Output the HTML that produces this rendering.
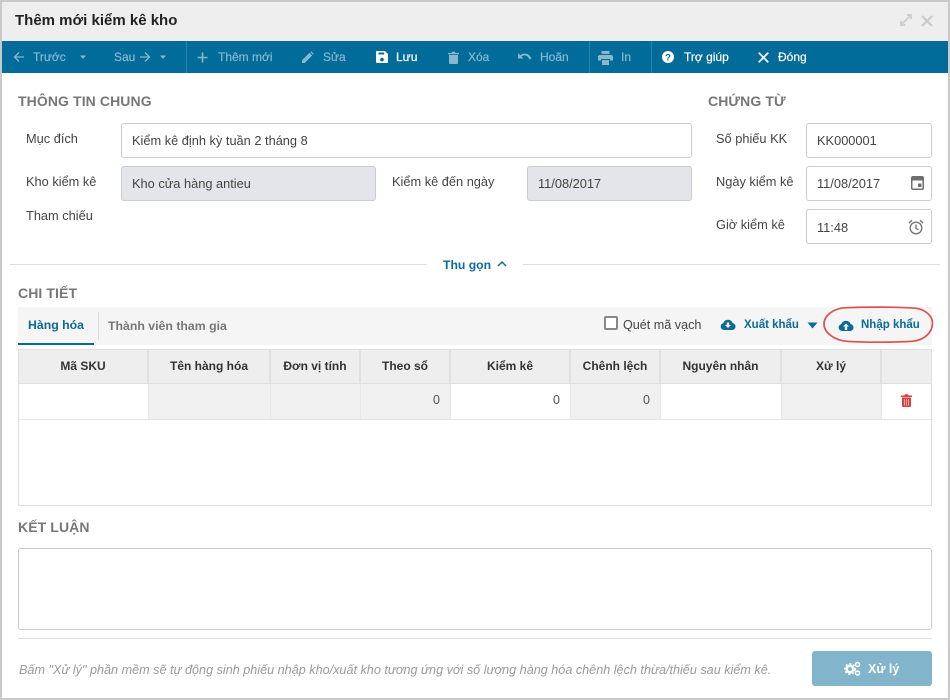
<!DOCTYPE html>
<html lang="vi">
<head>
<meta charset="utf-8">
<title>Thêm mới kiểm kê kho</title>
<style>
*{box-sizing:border-box}
html,body{margin:0;padding:0;width:950px;height:700px;overflow:hidden;background:#fff}
body{font-family:"Liberation Sans",sans-serif;font-size:12.8px;color:#444;position:relative}
.a{position:absolute}
.t{position:absolute;white-space:nowrap;line-height:16px;height:16px}
.tb{color:#fff;font-size:12px;-webkit-text-stroke:.2px currentColor}
.dim{color:#89b8ce}
.box{position:absolute;border:1px solid #ccc;border-radius:3px;background:#fff;height:35px}
.gray{background:#e4e5ea}
.h{font-weight:bold;font-size:14px;color:#777;letter-spacing:.1px}
.th{position:absolute;top:349px;height:35px;background:#eee;border-right:2px solid #e0e0e0;border-top:1px solid #e0e0e0;border-bottom:1px solid #e0e0e0;font-weight:bold;color:#333;font-size:12px;text-align:center;line-height:33px;white-space:nowrap}
.td{position:absolute;top:384px;height:35px;border-right:1px solid #e6e6e6;text-align:right;padding-right:10px;line-height:33px;font-size:12.5px;color:#555}
.g{background:#f0f0f0}
svg{position:absolute;display:block}
</style>
</head>
<body>
<!-- window frame -->
<div class="a" style="left:0;top:0;width:950px;height:700px;border:2px solid #c9c9c9"></div>
<div class="a" style="left:2px;top:2px;width:946px;height:39px;background:#eee"></div>
<div class="t" style="left:15px;top:13px;font-size:15px;font-weight:bold;color:#222">Thêm mới kiểm kê kho</div>
<svg style="left:899px;top:13px" width="14" height="14" viewBox="0 0 14 14" fill="none" stroke="#ccc" stroke-width="1.800"><path d="M3 11 11 3"/><path d="M8 2H12V6"/><path d="M2 8V12H6"/></svg>
<svg style="left:921px;top:15px" width="12" height="12" viewBox="0 0 12 12" fill="none" stroke="#c8c8c8" stroke-width="2"><path d="M1 1 11 11M11 1 1 11"/></svg>

<!-- toolbar -->
<div class="a" style="left:2px;top:41px;width:946px;height:32px;background:#016b99"></div>
<div class="a" style="left:186px;top:41px;width:1px;height:32px;background:#2a83ab"></div>
<div class="a" style="left:589px;top:41px;width:1px;height:32px;background:#2a83ab"></div>
<div class="a" style="left:651px;top:41px;width:1px;height:32px;background:#2a83ab"></div>

<svg style="left:13px;top:51px" width="12" height="12" viewBox="0 0 12 12" fill="none" stroke="#89b8ce" stroke-width="1.300"><path d="M11 6H1.500M6 1.500 1.500 6 6 10.500"/></svg>
<div class="t tb dim" style="left:33px;top:49px">Trước</div>
<svg style="left:79px;top:55px" width="8" height="5" viewBox="0 0 8 5"><path d="M1 .5H7L4 4z" fill="#89b8ce"/></svg>
<div class="t tb dim" style="left:114px;top:49px">Sau</div>
<svg style="left:139px;top:51px" width="12" height="12" viewBox="0 0 12 12" fill="none" stroke="#89b8ce" stroke-width="1.300"><path d="M1 6H10.500M6 1.500 10.500 6 6 10.500"/></svg>
<svg style="left:159px;top:55px" width="8" height="5" viewBox="0 0 8 5"><path d="M1 .5H7L4 4z" fill="#89b8ce"/></svg>
<svg style="left:197px;top:52px" width="11" height="11" viewBox="0 0 11 11"><path d="M4.700 .5H6.300V4.700H10.500V6.300H6.300V10.500H4.700V6.300H.5V4.700H4.700z" fill="#89b8ce"/></svg>
<div class="t tb dim" style="left:218px;top:49px">Thêm mới</div>
<svg style="left:301px;top:51px" width="13" height="13" viewBox="0 0 13 13"><path d="M1 12V9.300L8.500 1.800 11.200 4.500 3.700 12zM9.300 1 10.300.3 12.700 2.700 12 3.700z" fill="#89b8ce"/></svg>
<div class="t tb dim" style="left:323px;top:49px">Sửa</div>
<svg style="left:376px;top:51px" width="12" height="12" viewBox="0 0 12 12"><path fill-rule="evenodd" d="M1 0H9L12 3V11A1 1 0 0 1 11 12H1A1 1 0 0 1 0 11V1A1 1 0 0 1 1 0ZM2.500 1.500V3.500H8V1.500ZM6 6.800A1.800 1.800 0 1 0 6 10.400 1.800 1.800 0 1 0 6 6.800Z" fill="#fff"/></svg>
<div class="t tb" style="left:396px;top:49px">Lưu</div>
<svg style="left:448px;top:51px" width="11" height="13" viewBox="0 0 11 13"><path d="M0 2H3.500L4 .7H7L7.500 2H11V3.300H0zM1 4H10V12A1 1 0 0 1 9 13H2A1 1 0 0 1 1 12z" fill="#89b8ce"/></svg>
<div class="t tb dim" style="left:468px;top:49px">Xóa</div>
<svg style="left:518px;top:52px" width="14" height="10" viewBox="0 0 14 10"><path d="M0 1V6.500H5.500L3.400 4.400C5.800 2.500 9.800 3.200 11.500 7.500L13.500 6.800C11.800 1.500 6.200-.1 2.200 3.200z" fill="#89b8ce"/></svg>
<div class="t tb dim" style="left:540px;top:49px">Hoãn</div>
<svg style="left:598px;top:51px" width="15" height="14" viewBox="0 0 15 14"><path fill-rule="evenodd" d="M3.500 0H11.500V3H3.500ZM2 4H13A2 2 0 0 1 15 6V9.500H12V8H3V9.500H0V6A2 2 0 0 1 2 4ZM4 9H11V14H4Z" fill="#89b8ce"/></svg>
<div class="t tb dim" style="left:621px;top:49px">In</div>
<svg style="left:662px;top:51px" width="12" height="12" viewBox="0 0 12 12"><circle cx="6" cy="6" r="6" fill="#fff"/><text x="6" y="9.500" text-anchor="middle" font-family="Liberation Sans" font-weight="bold" font-size="9.500" fill="#016b99">?</text></svg>
<div class="t tb" style="left:684px;top:49px">Trợ giúp</div>
<svg style="left:758px;top:52px" width="11" height="11" viewBox="0 0 11 11" fill="none" stroke="#fff" stroke-width="1.700"><path d="M.7.7 10.300 10.300M10.300.7.7 10.300"/></svg>
<div class="t tb" style="left:778px;top:49px">Đóng</div>

<!-- THÔNG TIN CHUNG -->
<div class="t h" style="left:18px;top:93px">THÔNG TIN CHUNG</div>
<div class="t h" style="left:708px;top:93px">CHỨNG TỪ</div>

<div class="t" style="left:26px;top:131px">Mục đích</div>
<div class="box" style="left:121px;top:123px;width:571px"></div>
<div class="t" style="left:132px;top:133px">Kiểm kê định kỳ tuần 2 tháng 8</div>

<div class="t" style="left:26px;top:174px">Kho kiểm kê</div>
<div class="box gray" style="left:121px;top:166px;width:255px"></div>
<div class="t" style="left:132px;top:176px">Kho cửa hàng antieu</div>
<div class="t" style="left:392px;top:174px">Kiểm kê đến ngày</div>
<div class="box gray" style="left:527px;top:166px;width:165px"></div>
<div class="t" style="left:538px;top:176px">11/08/2017</div>
<div class="t" style="left:26px;top:208px">Tham chiếu</div>

<div class="t" style="left:716px;top:131px">Số phiếu KK</div>
<div class="box" style="left:806px;top:123px;width:126px"></div>
<div class="t" style="left:817px;top:133px">KK000001</div>
<div class="t" style="left:716px;top:174px">Ngày kiểm kê</div>
<div class="box" style="left:806px;top:166px;width:126px"></div>
<div class="t" style="left:817px;top:176px">11/08/2017</div>
<svg style="left:911px;top:176px" width="13" height="14" viewBox="0 0 13 14"><path fill-rule="evenodd" d="M2 0H11A2 2 0 0 1 13 2V12A2 2 0 0 1 11 14H2A2 2 0 0 1 0 12V2A2 2 0 0 1 2 0ZM1.500 4.500V12A.5.5 0 0 0 2 12.500H11A.5.5 0 0 0 11.500 12V4.500ZM7 7.500H10.500V11H7Z" fill="#6e6e6e"/></svg>
<div class="t" style="left:716px;top:217px">Giờ kiểm kê</div>
<div class="box" style="left:806px;top:209px;width:126px"></div>
<div class="t" style="left:817px;top:220px">11:48</div>
<svg style="left:908px;top:219px" width="16" height="16" viewBox="0 0 16 16" fill="none" stroke="#777" stroke-width="1.400"><circle cx="8" cy="9" r="5.800"/><path d="M8 5.500V9.300L10.500 10.800M1 4 4 1.300M15 4 12 1.300"/></svg>

<!-- Thu gọn -->
<div class="a" style="left:10px;top:264px;width:417px;height:1px;background:#ddd"></div>
<div class="a" style="left:523px;top:264px;width:417px;height:1px;background:#ddd"></div>
<div class="t" style="left:443px;top:257px;font-weight:bold;font-size:12.2px;color:#0b6a97">Thu gọn</div>
<svg style="left:497px;top:260px" width="10" height="7" viewBox="0 0 10 7" fill="none" stroke="#0b6a97" stroke-width="1.500"><path d="M1 6 5 2 9 6"/></svg>

<!-- CHI TIẾT -->
<div class="t h" style="left:18px;top:285px">CHI TIẾT</div>
<div class="a" style="left:18px;top:307px;width:914px;height:38px;background:#f5f5f5"></div>
<div class="a" style="left:18px;top:343px;width:76px;height:2px;background:#016b99"></div>
<div class="a" style="left:98px;top:312px;width:1px;height:28px;background:#ddd"></div>
<div class="t" style="left:28px;top:317px;font-weight:bold;font-size:12.300px;color:#0b6a97">Hàng hóa</div>
<div class="t" style="left:108px;top:318px;font-weight:bold;font-size:12.300px;color:#777">Thành viên tham gia</div>

<div class="a" style="left:604px;top:316px;width:14px;height:14px;border:2px solid #888;border-radius:2px;background:#fff"></div>
<div class="t" style="left:623px;top:317px;font-size:12.600px">Quét mã vạch</div>
<svg style="left:720px;top:319px" width="16" height="11" viewBox="0 0 16 11"><path d="M4 11A3.500 3.500 0 0 1 3.300 4.100 5 5 0 0 1 12.700 4.100 3.500 3.500 0 0 1 12.500 11Z" fill="#0b6a97"/><path d="M6.800 3.500H9.200V6H11L8 9 5 6H6.800Z" fill="#f5f5f5"/></svg>
<div class="t" style="left:744px;top:317px;font-weight:bold;font-size:11.500px;color:#0b6a97">Xuất khẩu</div>
<svg style="left:807px;top:322px" width="11" height="7" viewBox="0 0 11 7"><path d="M.5.5H10.500L5.500 6.500z" fill="#0b6a97"/></svg>
<svg style="left:838px;top:320px" width="16" height="11" viewBox="0 0 16 11"><path d="M4 11A3.500 3.500 0 0 1 3.300 4.100 5 5 0 0 1 12.700 4.100 3.500 3.500 0 0 1 12.500 11Z" fill="#0b6a97"/><path d="M6.800 10V6.500H5L8 3.500 11 6.500H9.200V10Z" fill="#f5f5f5"/></svg>
<div class="t" style="left:861px;top:317px;font-weight:bold;font-size:11.500px;color:#0b6a97">Nhập khẩu</div>
<svg style="left:821px;top:305px" width="114" height="39" viewBox="0 0 114 39" fill="none"><path d="M3 19C3 10 14 3 24 2.800 45 1.800 75 1.800 94 3.200 104 4 111.500 11 111.500 18 111.500 27 104 35 92 36.200 72 37.500 42 37.500 26 36.300 14 35.500 3 28 3 19Z" stroke="#d9534f" stroke-width="1.700"/></svg>

<!-- table -->
<div class="a" style="left:18px;top:349px;width:914px;height:157px;border:1px solid #ddd;background:#fff"></div>
<div class="th" style="left:18px;width:131px;border-left:1px solid #e0e0e0">Mã SKU</div>
<div class="th" style="left:149px;width:122px">Tên hàng hóa</div>
<div class="th" style="left:271px;width:90px">Đơn vị tính</div>
<div class="th" style="left:361px;width:90px">Theo sổ</div>
<div class="th" style="left:451px;width:120px">Kiểm kê</div>
<div class="th" style="left:571px;width:90px">Chênh lệch</div>
<div class="th" style="left:661px;width:121px">Nguyên nhân</div>
<div class="th" style="left:782px;width:100px">Xử lý</div>
<div class="th" style="left:882px;width:50px;border-right:1px solid #e0e0e0"></div>
<div class="td" style="left:19px;width:130px"></div>
<div class="td g" style="left:149px;width:122px"></div>
<div class="td g" style="left:271px;width:90px"></div>
<div class="td g" style="left:361px;width:90px">0</div>
<div class="td" style="left:451px;width:120px">0</div>
<div class="td g" style="left:571px;width:90px">0</div>
<div class="td" style="left:661px;width:121px"></div>
<div class="td g" style="left:782px;width:100px"></div>
<div class="a" style="left:19px;top:419px;width:912px;height:1px;background:#e4e4e4"></div>
<svg style="left:901px;top:394px" width="11" height="13" viewBox="0 0 11 13"><path d="M0 1.500H3.500L4 .3H7L7.500 1.500H11V3H0ZM1 3.500H10V12A1 1 0 0 1 9 13H2A1 1 0 0 1 1 12Z" fill="#dc3f43"/><path d="M3 5H4V11.500H3ZM5 5H6V11.500H5ZM7 5H8V11.500H7Z" fill="#f2a8aa"/></svg>

<!-- KẾT LUẬN -->
<div class="t h" style="left:18px;top:519px">KẾT LUẬN</div>
<div class="a" style="left:18px;top:548px;width:914px;height:82px;border:1px solid #ccc;border-radius:3px"></div>
<div class="a" style="left:18px;top:638px;width:914px;height:1px;background:#ddd"></div>

<!-- footer -->
<div class="t" style="left:19px;top:662px;font-style:italic;font-size:12.630px;color:#9a9a9a">Bấm "Xử lý" phần mềm sẽ tự động sinh phiếu nhập kho/xuất kho tương ứng với số lượng hàng hóa chênh lệch thừa/thiếu sau kiểm kê.</div>
<div class="a" style="left:812px;top:651px;width:120px;height:35px;background:#82b5cc;border-radius:3px"></div>
<svg style="left:844px;top:661px" width="17" height="15" viewBox="0 0 17 15" fill="none" stroke="#fff"><circle cx="6" cy="8" r="3.300" stroke-width="2.600"/><circle cx="6" cy="8" r="5.300" stroke-width="1.300" stroke-dasharray="2 2"/><circle cx="13.500" cy="3.500" r="2" stroke-width="1.500"/><circle cx="13.500" cy="12" r="2" stroke-width="1.500"/></svg>
<div class="t" style="left:868px;top:661px;color:#fff;font-weight:bold;font-size:12.500px">Xử lý</div>
</body>
</html>
